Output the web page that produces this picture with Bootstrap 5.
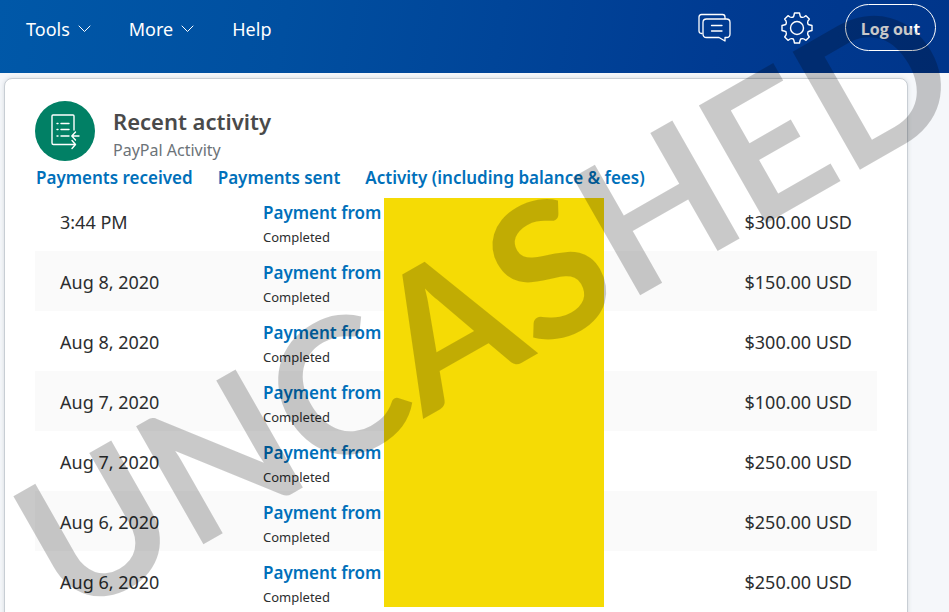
<!DOCTYPE html>
<html lang="en">
<head>
<meta charset="utf-8">
<meta name="viewport" content="width=device-width, initial-scale=1">
<title>Recent activity</title>
<link href="https://cdn.jsdelivr.net/npm/bootstrap@5.3.0/dist/css/bootstrap.min.css" rel="stylesheet">
<style>
  body { font-family: "Noto Sans", "Open Sans", sans-serif; background: #f5f7fa; color: #2c2e2f; }
  .topbar { height: 73px; padding: 0 13px 18px 26px; background: linear-gradient(100deg, #0058a8 0%, #004fa0 30%, #003b92 75%, #00358a 100%); }
  .topbar a, .topbar button { color: #fff; text-decoration: none; font-size: 18px; line-height: 24px; }
  .main-links { gap: 38px; padding-top: 2px; }
  .tools { gap: 48px; }
  .logout { width: 91px; height: 47px; margin-left: -16px; border: 1px solid #fff; border-radius: 24px; background: none; padding: 2px 0 0; }
  .topbar .logout { font-family: "Open Sans", sans-serif; font-size: 16px; font-weight: 700; }
  .panel { margin: 5px 41px 0 4px; padding: 22px 30px 30px; background: #fff; border: 1px solid #c8ced4; border-radius: 8px; box-shadow: 0 0 4px #d5dae0; }
  .badge-circle { width: 60px; height: 60px; background: #018065; }
  .heading { margin-left: 18px; padding-top: 6px; }
  h1 { font-size: 22px; line-height: 28px; font-weight: 600; color: #4a4a4a; }
  .subtitle { font-size: 16px; line-height: 30px; color: #6c7378; }
  .filters { gap: 25px; padding: 1px 0 1px 1px; font-size: 17px; line-height: 24px; font-weight: 600; }
  .filters a, .payee { color: #0070ba; text-decoration: none; }
  .activity { width: 100%; table-layout: fixed; }
  .activity tr { height: 60px; }
  .activity tr:nth-child(even) { background: #fafafa; }
  .activity td { padding: 8px 0 0; font-size: 18px; line-height: 24px; vertical-align: middle; }
  .activity .when { width: 228px; padding: 2px 0 0 25px; }
  .activity .amount { width: 220px; padding: 2px 25px 0 0; text-align: right; }
  .payee { font-size: 17px; line-height: 24px; font-weight: 600; }
  .state { font-size: 13px; line-height: 24px; }
  .redaction { left: 349px; top: 7px; bottom: 4px; width: 220px; background: #f5db05; }
  .stamp { left: 0; top: 0; width: 949px; height: 612px; pointer-events: none; }
  .stamp text { font-family: Lato, sans-serif; font-size: 188px; font-weight: 700; fill: #000; fill-opacity: .21; }
  .icon { fill: none; stroke: #fff; stroke-linecap: round; stroke-linejoin: round; }
</style>
<script src="https://cdn.jsdelivr.net/npm/bootstrap@5.3.0/dist/js/bootstrap.bundle.min.js"></script>
</head>
<body class="vh-100 overflow-hidden position-relative">
<header class="topbar d-flex align-items-center justify-content-between">
  <nav class="main-links d-flex align-items-center">
    <a href="#" class="d-flex align-items-center gap-2">Tools <svg class="icon" width="13" height="8" viewBox="0 0 13 8"><path d="M1 1l5.500 5.500L12 1"/></svg></a>
    <a href="#" class="d-flex align-items-center gap-2">More <svg class="icon" width="13" height="8" viewBox="0 0 13 8"><path d="M1 1l5.500 5.500L12 1"/></svg></a>
    <a href="#">Help</a>
  </nav>
  <div class="tools d-flex align-items-center">
    <a href="#" class="d-flex" aria-label="Messages"><svg class="icon" width="36" height="32" viewBox="0 0 36 32" stroke-width="1.300"><path d="M5 21.500H4.500Q2 21.500 2 19V5Q2 2.500 4.500 2.500H25.500Q28 2.500 28 5V6.500"/><path d="M9.500 7H29.500Q33 7 33 10.500V22Q33 25.500 29.500 25.500H28V29L22 25.500H9.500Q6 25.500 6 22V10.500Q6 7 9.500 7Z"/><path d="M14.500 13.500H25M14.500 19H25"/></svg></a>
    <a href="#" class="d-flex" aria-label="Settings"><svg class="icon" width="32" height="32" viewBox="-16 -16 32 32" stroke-width="1.400"><circle r="6.500"/><path d="M-2.500 -15H2.500L3.200 -12Q3.400 -11 4.500 -10.800Q6 -10.400 7 -11L9 -12.300L12.300 -9L11 -7Q10.400 -6 10.800 -4.500Q11 -3.400 12 -3.200L15 -2.500V2.500L12 3.200Q11 3.400 10.800 4.500Q10.400 6 11 7L12.300 9L9 12.300L7 11Q6 10.400 4.500 10.800Q3.400 11 3.200 12L2.500 15H-2.500L-3.200 12Q-3.400 11 -4.500 10.800Q-6 10.400 -7 11L-9 12.300L-12.300 9L-11 7Q-10.400 6 -10.800 4.500Q-11 3.400 -12 3.200L-15 2.500V-2.500L-12 -3.200Q-11 -3.400 -10.800 -4.500Q-10.400 -6 -11 -7L-12.300 -9L-9 -12.300L-7 -11Q-6 -10.400 -4.500 -10.800Q-3.400 -11 -3.200 -12Z"/></svg></a>
    <button type="button" class="logout">Log out</button>
  </div>
</header>
<main class="panel">
  <div class="d-flex">
    <span class="badge-circle rounded-circle d-flex flex-shrink-0"><svg class="icon" width="60" height="60" viewBox="0 0 60 60" stroke-width="1.400"><path d="M39 29V15Q39 14 38 14H18Q17 14 17 15V42Q17 43.500 18.500 43.500H39.500M37 39.500L40.500 43.500L37 47.500M44 35H37M40.500 31L36.800 35L40.500 39"/><path d="M22 22.500H23M26 22.500H34M22 28.500H23M26 28.500H34M22 35H23M26 35H34"/></svg></span>
    <div class="heading">
      <h1 class="m-0">Recent activity</h1>
      <div class="subtitle">PayPal Activity</div>
    </div>
  </div>
  <nav class="filters d-flex">
    <a href="#">Payments received</a>
    <a href="#">Payments sent</a>
    <a href="#">Activity (including balance &amp; fees)</a>
  </nav>
  <div class="position-relative">
    <table class="activity">
      <tbody>
        <tr><td class="when">3:44 PM</td><td><a href="#" class="payee d-block">Payment from</a><div class="state">Completed</div></td><td class="amount">$300.00 USD</td></tr>
        <tr><td class="when">Aug 8, 2020</td><td><a href="#" class="payee d-block">Payment from</a><div class="state">Completed</div></td><td class="amount">$150.00 USD</td></tr>
        <tr><td class="when">Aug 8, 2020</td><td><a href="#" class="payee d-block">Payment from</a><div class="state">Completed</div></td><td class="amount">$300.00 USD</td></tr>
        <tr><td class="when">Aug 7, 2020</td><td><a href="#" class="payee d-block">Payment from</a><div class="state">Completed</div></td><td class="amount">$100.00 USD</td></tr>
        <tr><td class="when">Aug 7, 2020</td><td><a href="#" class="payee d-block">Payment from</a><div class="state">Completed</div></td><td class="amount">$250.00 USD</td></tr>
        <tr><td class="when">Aug 6, 2020</td><td><a href="#" class="payee d-block">Payment from</a><div class="state">Completed</div></td><td class="amount">$250.00 USD</td></tr>
        <tr><td class="when">Aug 6, 2020</td><td><a href="#" class="payee d-block">Payment from</a><div class="state">Completed</div></td><td class="amount">$250.00 USD</td></tr>
      </tbody>
    </table>
    <div class="redaction position-absolute"></div>
  </div>
</main>
<svg class="stamp position-absolute" viewBox="0 0 949 612"><text transform="translate(69 621) rotate(-29.7)">UNCASHED</text></svg>
</body>
</html>
